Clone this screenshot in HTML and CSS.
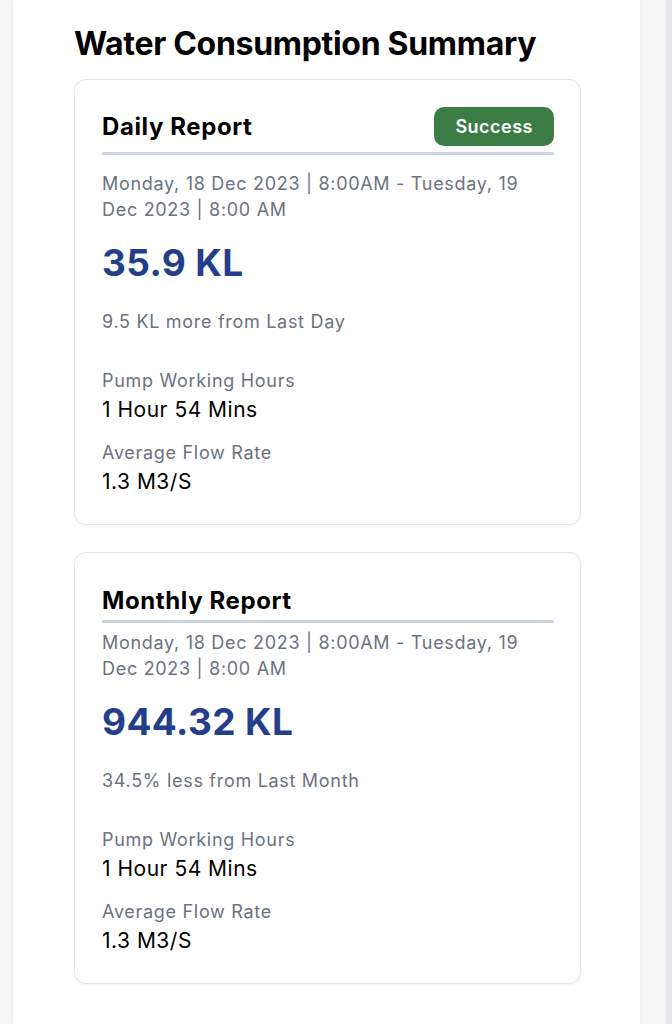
FILE: index.html
```html
<!DOCTYPE html>
<html lang="en">
<head>
<meta charset="utf-8">
<title>Water Consumption Summary</title>
<link rel="stylesheet" href="styles.css">
</head>
<body>
  <div class="gutter"></div>
  <main class="panel">
    <h1 class="page-title">Water Consumption Summary</h1>

    <section class="card card--daily">
      <header class="card-header">
        <h2 class="card-title">Daily Report</h2>
        <span class="badge">Success</span>
      </header>
      <p class="period period--daily">Monday, 18 Dec 2023 | 8:00AM - Tuesday, 19 Dec 2023 | 8:00 AM</p>
      <p class="total">35.9 KL</p>
      <p class="delta">9.5 KL more from Last Day</p>
      <div class="stat stat--first">
        <p class="stat-label">Pump Working Hours</p>
        <p class="stat-value">1 Hour 54 Mins</p>
      </div>
      <div class="stat">
        <p class="stat-label">Average Flow Rate</p>
        <p class="stat-value">1.3 M3/S</p>
      </div>
    </section>

    <section class="card card--monthly">
      <header class="card-header card-header--plain">
        <h2 class="card-title">Monthly Report</h2>
      </header>
      <p class="period period--monthly">Monday, 18 Dec 2023 | 8:00AM - Tuesday, 19 Dec 2023 | 8:00 AM</p>
      <p class="total">944.32 KL</p>
      <p class="delta">34.5% less from Last Month</p>
      <div class="stat stat--first">
        <p class="stat-label">Pump Working Hours</p>
        <p class="stat-value">1 Hour 54 Mins</p>
      </div>
      <div class="stat">
        <p class="stat-label">Average Flow Rate</p>
        <p class="stat-value">1.3 M3/S</p>
      </div>
    </section>
  </main>
  <div class="side"></div>
  <div class="scroll-edge"></div>
</body>
</html>
```

FILE: styles.css
```css
* {
  box-sizing: border-box;
}

html, body {
  margin: 0;
  padding: 0;
}

body {
  display: flex;
  min-height: 1024px;
  background: #f7f7f8;
  font-family: Inter, "Noto Sans", "Liberation Sans", sans-serif;
  color: #000;
}

.gutter {
  width: 13px;
  flex: none;
}

.panel {
  width: 627px;
  flex: none;
  background: #ffffff;
  box-shadow: 0 0 4px rgba(0, 0, 0, 0.07);
  padding: 24px 59px 40px 61px;
}

.side {
  flex: 1;
}

.scroll-edge {
  width: 6px;
  flex: none;
  background: #e6e6eb;
}

.page-title {
  margin: 0 0 16px;
  font-size: 32px;
  font-weight: 700;
  line-height: 39px;
  letter-spacing: -0.3px;
}

.card {
  border: 1px solid #e3e5e9;
  border-radius: 12px;
  padding: 27px 26px 28px 27px;
  box-shadow: 0 1px 3px rgba(0, 0, 0, 0.05);
  background: #fff;
}

.card + .card {
  margin-top: 27px;
}

.card-header {
  display: flex;
  justify-content: space-between;
  align-items: center;
  padding-bottom: 6px;
  border-bottom: 3px solid #cdd5e0;
}

.card-header--plain {
  padding-top: 7px;
}

.card-title {
  margin: 0;
  font-size: 24px;
  font-weight: 700;
  line-height: 33px;
  letter-spacing: 0.6px;
}

.card-header--plain .card-title {
  line-height: 27px;
}

.badge {
  background: #3c7d46;
  color: #fff;
  font-size: 18px;
  font-weight: 600;
  line-height: 23px;
  letter-spacing: 0.5px;
  padding: 8px 21px;
  border-radius: 10px;
}

p {
  margin: 0;
}

.period {
  font-size: 18px;
  line-height: 26px;
  letter-spacing: 0.7px;
  color: #6b7280;
}

.period--daily {
  margin-top: 16px;
}

.period--monthly {
  margin-top: 7px;
}

.total {
  margin-top: 18px;
  font-size: 37px;
  font-weight: 700;
  line-height: 43px;
  color: #243e8b;
  letter-spacing: 0.4px;
}

.delta {
  margin-top: 25px;
  font-size: 18px;
  line-height: 26px;
  letter-spacing: 0.7px;
  color: #6b7280;
}

.stat {
  margin-top: 16px;
}

.stat--first {
  margin-top: 33px;
}

.stat-label {
  font-size: 18px;
  line-height: 26px;
  letter-spacing: 0.7px;
  color: #6b7280;
}

.stat-value {
  margin-top: 2px;
  font-size: 21px;
  line-height: 28px;
  letter-spacing: 0.5px;
  color: #000;
}
```
